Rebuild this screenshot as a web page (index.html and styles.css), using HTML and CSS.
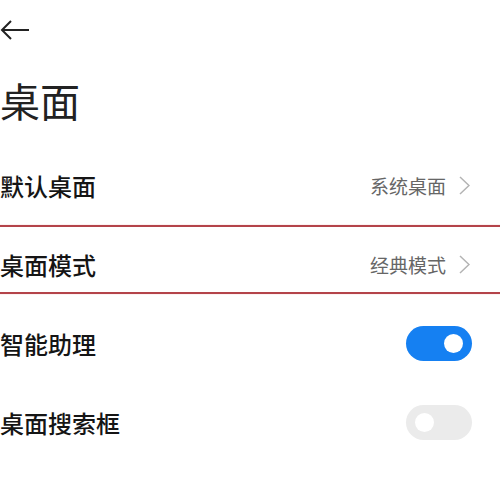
FILE: index.html
```html
<!DOCTYPE html>
<html lang="zh-CN">

<head>
    <meta charset="UTF-8">
    <meta name="viewport" content="width=device-width, initial-scale=1.0">
    <title>桌面</title>

    <link rel="stylesheet" href="styles.css">
</head>

<body>
    <div class="page">
        <!-- 顶部返回 -->
        <div class="topbar">
            <svg class="back" width="30" height="20" viewBox="0 0 30 20">
                <path d="M2 10 H29 M11 1 L2 10 L11 19" fill="none" stroke="#222" stroke-width="2" />
            </svg>
        </div>

        <h1 class="title">桌面</h1>

        <ul class="list">
            <li class="row">
                <span class="label">默认桌面</span>
                <span class="value">系统桌面
                    <svg class="arrow" width="11" height="19" viewBox="0 0 11 19">
                        <path d="M1 1 L10 9.5 L1 18" fill="none" stroke="#b3b3b3" stroke-width="1.5" />
                    </svg>
                </span>
            </li>
            <li class="row">
                <span class="label">桌面模式</span>
                <span class="value">经典模式
                    <svg class="arrow" width="11" height="19" viewBox="0 0 11 19">
                        <path d="M1 1 L10 9.5 L1 18" fill="none" stroke="#b3b3b3" stroke-width="1.5" />
                    </svg>
                </span>
                <!-- 红框标注 -->
                <div class="mark"></div>
            </li>
            <li class="row">
                <span class="label">智能助理</span>
                <span class="switch on"></span>
            </li>
            <li class="row">
                <span class="label">桌面搜索框</span>
                <span class="switch"></span>
            </li>
        </ul>
    </div>
</body>

</html>
```

FILE: styles.css
```css
* {
    margin: 0;
    padding: 0;
    box-sizing: border-box;
    list-style: none;
}

body {
    background: #fff;
    font-family: "Noto Sans CJK SC", "Noto Sans", sans-serif;
    color: #1a1a1a;
}

.page {
    width: 500px;
    height: 488px;
    overflow: hidden;
}

.topbar {
    height: 60px;
    display: flex;
    align-items: center;
}

.back {
    display: block;
}

.title {
    margin-top: 20px;
    font-size: 40px;
    line-height: 40px;
    font-weight: 400;
    color: #222;
}

.list {
    margin-top: 26px;
}

.row {
    position: relative;
    height: 79px;
    display: flex;
    align-items: center;
    justify-content: space-between;
    padding-right: 28px;
}

.label {
    font-size: 24px;
    font-weight: 500;
    color: #151515;
}

.value {
    display: flex;
    align-items: center;
    gap: 13px;
    font-size: 19px;
    color: #666;
    margin-right: 2px;
}

.arrow {
    display: block;
}

.switch {
    position: relative;
    width: 66px;
    height: 35px;
    border-radius: 18px;
    background: #ebebeb;
}

.switch::after {
    content: "";
    position: absolute;
    top: 8px;
    left: 9px;
    width: 19px;
    height: 19px;
    border-radius: 50%;
    background: #fff;
}

.switch.on {
    background: #1580f2;
}

.switch.on::after {
    left: auto;
    right: 9px;
}

/* 标注框，盖在第二行上面 */
.mark {
    position: absolute;
    top: 0;
    left: -4px;
    right: -4px;
    height: 69px;
    border: 2px solid #b4444a;
    box-shadow: 0 0 1px #f0b0b0;
    pointer-events: none;
}
```
